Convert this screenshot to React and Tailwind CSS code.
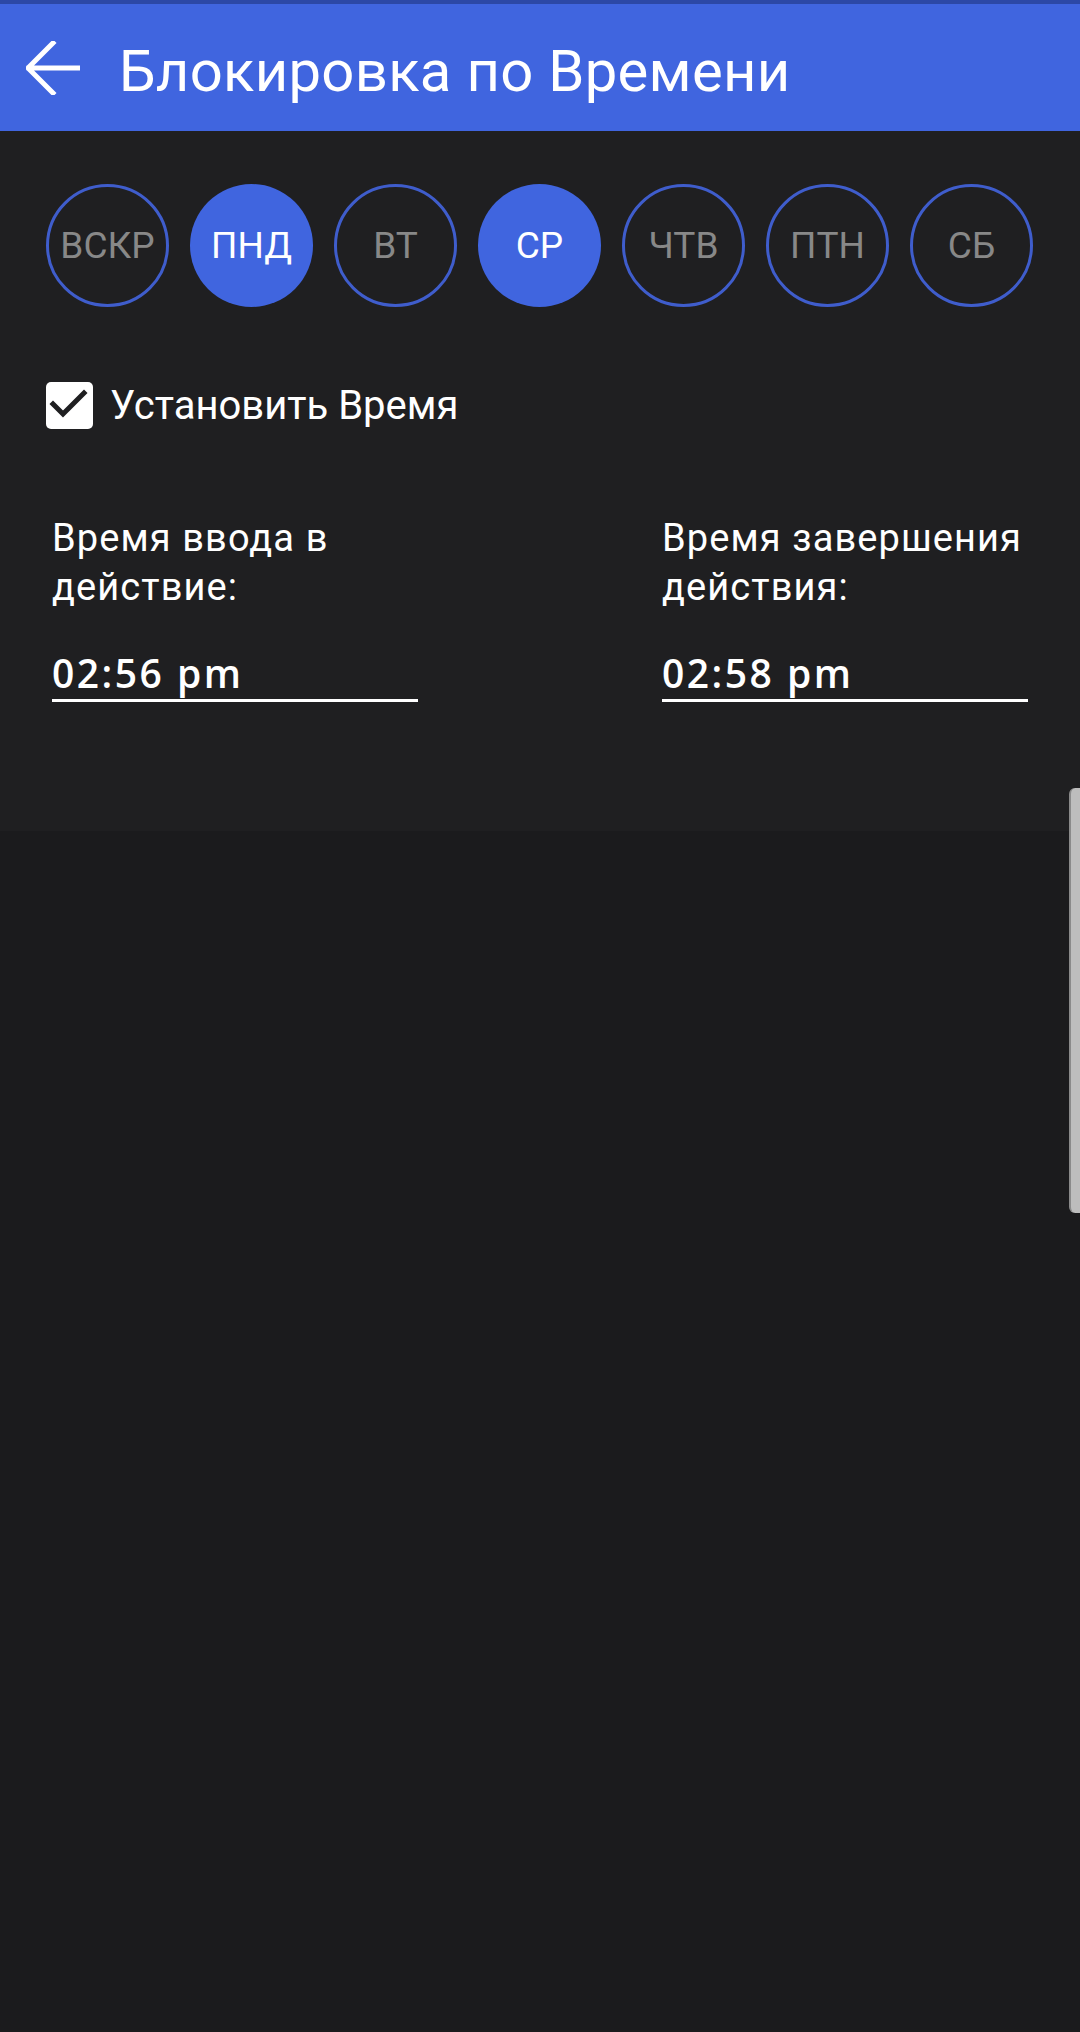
import React from "react";

const days = [
  { label: "ВСКР", on: false },
  { label: "ПНД", on: true },
  { label: "ВТ", on: false },
  { label: "СР", on: true },
  { label: "ЧТВ", on: false },
  { label: "ПТН", on: false },
  { label: "СБ", on: false },
];

const roboto = { fontFamily: "Roboto, 'Noto Sans', sans-serif" };

const TimeField = ({ label, value }) => (
  <div className="w-[366px] flex flex-col">
    <p className="text-[38px] leading-[49px] tracking-[1.1px] text-white">{label}</p>
    <div className="mt-[42px] border-b-[3px] border-white pb-[7px]">
      <span
        className="block text-[39px] leading-[38px] font-semibold tracking-[2.5px] text-white"
        style={{ fontFamily: "'Open Sans', sans-serif" }}
      >
        {value}
      </span>
    </div>
  </div>
);

export default function App() {
  return (
    <div className="relative min-h-[2032px] w-[1080px] bg-[#1b1b1d]" style={roboto}>
      {/* status strip */}
      <div className="h-[4px] bg-[#2c48a6]" />

      {/* toolbar */}
      <header className="h-[127px] bg-[#4065df] flex items-center pl-[26px]">
        <svg width="54" height="54" viewBox="0 0 54 54" fill="none">
          <path
            d="M52 27H3M27 2L2 27l25 25"
            stroke="white"
            strokeWidth="5"
            strokeLinecap="square"
            strokeLinejoin="miter"
          />
        </svg>
        <h1 className="ml-[39px] mt-[7px] text-[58px] leading-none tracking-[0.3px] text-white font-normal">
          Блокировка по Времени
        </h1>
      </header>

      {/* content */}
      <section className="h-[700px] bg-[#1f1f21] px-[46px] pt-[53px]">
        <div className="flex gap-[21px]">
          {days.map((d) => (
            <div
              key={d.label}
              className={
                d.on
                  ? "w-[123px] h-[123px] rounded-full bg-[#4065df] flex items-center justify-center text-white text-[37px]"
                  : "w-[123px] h-[123px] rounded-full border-[3px] border-[#3f5dcc] flex items-center justify-center text-[#888888] text-[37px]"
              }
            >
              {d.label}
            </div>
          ))}
        </div>

        <div className="mt-[75px] flex items-center">
          <div className="w-[47px] h-[47px] rounded-[5px] bg-white">
            <svg width="47" height="47" viewBox="0 0 47 47" fill="none">
              <path
                d="M7 22l10 10 21-21"
                stroke="#1f1f21"
                strokeWidth="5"
                strokeLinecap="square"
              />
            </svg>
          </div>
          <span className="ml-[17px] text-[40px] leading-none text-white">
            Установить Время
          </span>
        </div>

        <div className="mt-[85px] px-[6px] flex justify-between">
          <TimeField label="Время ввода в действие:" value="02:56 pm" />
          <TimeField label="Время завершения действия:" value="02:58 pm" />
        </div>
      </section>

      {/* scroll thumb */}
      <div className="absolute right-0 top-[788px] h-[425px] w-[11px] rounded-l-[6px] bg-[#bdbdbd] border-l-2 border-[#8a8a8a]" />
    </div>
  );
}
